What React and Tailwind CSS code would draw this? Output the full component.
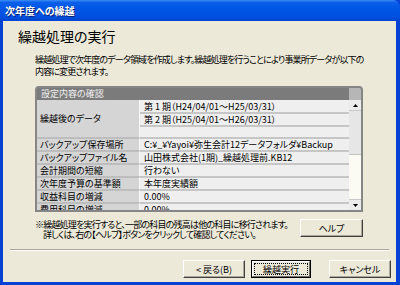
import React from 'react'

const ROWS = [
  { label: 'バックアップ保存場所', value: 'C:¥_¥Yayoi¥弥生会計12データフォルダ¥Backup' },
  { label: 'バックアップファイル名', value: '山田株式会社(1期)_繰越処理前.KB12' },
  { label: '会計期間の短縮', value: '行わない' },
  { label: '次年度予算の基準額', value: '本年度実績額' },
  { label: '収益科目の増減', value: '0.00%' },
  { label: '費用科目の増減', value: '0.00%' },
]

function Arrow({ up }) {
  return (
    <svg width="5" height="3" viewBox="0 0 5 3">
      <path d={up ? 'M0 3 L2.5 0 L5 3 Z' : 'M0 0 L2.5 3 L5 0 Z'} fill="#000" />
    </svg>
  )
}

function Button({ children, primary, className = '' }) {
  if (primary) {
    return (
      <div className={`h-[18px] w-[60px] border border-black bg-[#ece9d8] ${className}`}>
        <div className="h-full w-full border border-t-white border-l-white border-r-[#716f64] border-b-[#716f64] p-[1px]">
          <div className="h-full w-full border border-dotted border-black flex items-center justify-center text-[9px] leading-none">
            {children}
          </div>
        </div>
      </div>
    )
  }
  return (
    <div
      className={`h-[18px] w-[62px] border border-t-white border-l-white border-r-[#404040] border-b-[#404040] bg-[#ece9d8] shadow-[inset_-1px_-1px_0_#aca899] flex items-center justify-center text-[9px] leading-none ${className}`}
    >
      {children}
    </div>
  )
}

export default function App() {
  return (
    <div className="w-[400px] h-[285px] flex flex-col bg-[#0842d4] overflow-hidden font-['Noto_Sans_CJK_JP',sans-serif] [font-feature-settings:'palt'] text-black">
      {/* Title bar */}
      <div className="h-[21px] shrink-0 rounded-tr-[7px] bg-[linear-gradient(180deg,#3b8cf5_0%,#0a5eea_12%,#0055e5_45%,#0050e0_80%,#0143cf_100%)] flex items-center pl-[5px]">
        <span className="text-white font-bold text-[10px] leading-none [text-shadow:1px_1px_0_#0a1e72]">次年度への繰越</span>
      </div>

      {/* Body */}
      <div className="flex-1 ml-[3px] mr-[4px] mb-[3px] bg-[#ece9d8] flex flex-col">
        <h1 className="pl-[15px] pt-[7px] text-[14px] leading-[16px] font-normal">繰越処理の実行</h1>

        <p className="pl-[32px] pt-[10px] text-[9px] leading-[12px] tracking-[-0.85px] whitespace-nowrap">
          繰越処理で次年度のデータ領域を作成します。繰越処理を行うことにより事業所データが以下の
          <br />
          内容に変更されます。
        </p>

        {/* Settings table */}
        <div className="ml-[32px] mt-[8px] w-[328px] h-[126px] shrink-0 border-2 border-[#868686] rounded-t-[4px] bg-[#868686] flex flex-col overflow-hidden">
          <div className="flex h-[12px] shrink-0">
            <div className="flex-1 bg-[#7b7b7b] text-[#f2f2f2] pl-[4px] text-[9px] leading-[12px]">設定内容の確認</div>
            <div className="w-[12px] bg-[#b6b6b6]" />
          </div>
          <div className="flex flex-1 min-h-0">
            <div className="flex-1 flex flex-col overflow-hidden bg-[#efefef]">
              <div className="flex h-[37px] shrink-0">
                <div className="w-[103px] bg-[#d5d5d5] border-r border-r-[#f8f8f8] flex items-center pl-[3px] text-[9px]">
                  繰越後のデータ
                </div>
                <div className="flex-1 flex flex-col">
                  <div className="h-[12px] pl-[4px] pt-[1px] text-[9px] leading-[11px] whitespace-nowrap">第 1 期（H24/04/01～H25/03/31）</div>
                  <div className="h-[13px] border-t-2 border-[#c6c6c6] pl-[4px] text-[9px] leading-[11px] whitespace-nowrap">第 2 期（H25/04/01～H26/03/31）</div>
                  <div className="h-[12px] border-t-2 border-[#c6c6c6]" />
                </div>
              </div>
              {ROWS.map((r) => (
                <div key={r.label} className="flex h-[13px] shrink-0">
                  <div className="w-[103px] bg-[#d5d5d5] border-t-2 border-[#bdbdbd] border-r border-r-[#f8f8f8] pl-[3px] text-[9px] leading-[11px] whitespace-nowrap">
                    {r.label}
                  </div>
                  <div className="flex-1 border-t-2 border-[#c6c6c6] pl-[4px] text-[9px] leading-[11px] whitespace-nowrap">
                    {r.value}
                  </div>
                </div>
              ))}
            </div>

            {/* Scrollbar */}
            <div className="w-[12px] flex flex-col bg-[#fbfbf3]">
              <div className="h-[11px] bg-[#ececec] flex items-center justify-center border-b border-[#c9c9c9]">
                <Arrow up />
              </div>
              <div className="h-[44px] bg-[#e6e6e6] border-b border-[#c2c2c2]" />
              <div className="flex-1" />
              <div className="h-[11px] bg-[#ececec] flex items-center justify-center border-t border-[#c9c9c9]">
                <Arrow />
              </div>
            </div>
          </div>
        </div>

        {/* Note + help */}
        <div className="flex items-start mt-[6px] pl-[32px]">
          <p className="pt-[2px] text-[9px] leading-[10px] tracking-[-0.8px] whitespace-nowrap">
            ※繰越処理を実行すると、一部の科目の残高は他の科目に移行されます。
            <br />
            <span className="pl-[8px]">詳しくは、右の【ヘルプ】ボタンをクリックして確認してください。</span>
          </p>
          <Button className="ml-auto mr-[33px] mt-[1px] !w-[63px]">ヘルプ</Button>
        </div>

        {/* Separator */}
        <div className="mx-[7px] mt-[9px] border-t border-[#aca899] border-b border-b-white" />

        {/* Footer buttons */}
        <div className="flex justify-end items-center mt-[9px] pr-[5px]">
          <Button>&lt; 戻る(B)</Button>
          <Button primary className="ml-[6px]">繰越実行</Button>
          <Button className="ml-[18px]">キャンセル</Button>
        </div>
      </div>
    </div>
  )
}
